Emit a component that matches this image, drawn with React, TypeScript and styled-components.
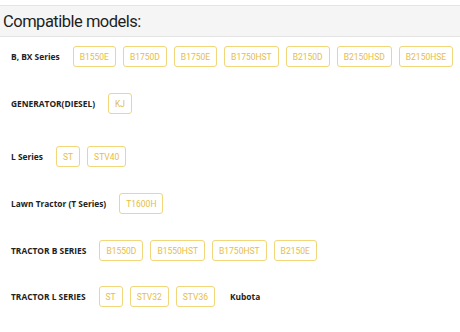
import React from "react";
import styled, { createGlobalStyle } from "styled-components";

const Global = createGlobalStyle`
  html, body { margin: 0; padding: 0; background: #ffffff; }
  body { font-family: "Open Sans", "Noto Sans", sans-serif; }
`;

const Page = styled.div`
  width: 460px;
  padding-top: 5px;
`;

const Header = styled.div`
  height: 30px;
  background: #f5f5f5;
  border-top: 1px solid #e4e4e4;
  border-bottom: 1px solid #e4e4e4;
  display: flex;
  align-items: center;
  padding-left: 3px;
`;

const Title = styled.h2`
  margin: 0;
  font-family: "Roboto", "Open Sans", sans-serif;
  font-weight: 400;
  font-size: 16.5px;
  letter-spacing: -0.5px;
  color: #1e1e1e;
`;

const List = styled.div`
  display: flex;
  flex-direction: column;
  padding-left: 11px;
`;

const Row = styled.div<{ $top: number }>`
  display: flex;
  align-items: center;
  margin-top: ${(p) => p.$top}px;
  height: 21px;
`;

const Label = styled.span`
  font-family: "Open Sans", sans-serif;
  font-weight: 700;
  font-size: 8.4px;
  color: #222222;
  margin-right: 13px;
  white-space: nowrap;
`;

const Tags = styled.div`
  display: flex;
  gap: 7px;
  align-items: center;
`;

const Tag = styled.span`
  box-sizing: border-box;
  height: 21px;
  display: inline-flex;
  align-items: center;
  padding: 0 6px;
  border: 1.5px solid #f1d67a;
  border-radius: 3px;
  font-family: "Roboto", sans-serif;
  font-size: 8.5px;
  color: #e6bd45;
  white-space: nowrap;
`;

const Brand = styled.span`
  font-family: "Open Sans", sans-serif;
  font-weight: 700;
  font-size: 8.4px;
  color: #222222;
  margin-left: 15px;
`;

type Series = { label: string; models: string[]; top: number; brand?: string };

const data: Series[] = [
  { label: "B, BX Series", top: 9, models: ["B1550E", "B1750D", "B1750E", "B1750HST", "B2150D", "B2150HSD", "B2150HSE"] },
  { label: "GENERATOR(DIESEL)", top: 26, models: ["KJ"] },
  { label: "L Series", top: 32, models: ["ST", "STV40"] },
  { label: "Lawn Tractor (T Series)", top: 26, models: ["T1600H"] },
  { label: "TRACTOR B SERIES", top: 26, models: ["B1550D", "B1550HST", "B1750HST", "B2150E"] },
  { label: "TRACTOR L SERIES", top: 25, models: ["ST", "STV32", "STV36"], brand: "Kubota" },
];

export default function App() {
  return (
    <Page>
      <Global />
      <Header>
        <Title>Compatible models:</Title>
      </Header>
      <List>
        {data.map((s) => (
          <Row key={s.label} $top={s.top}>
            <Label>{s.label}</Label>
            <Tags>
              {s.models.map((m) => (
                <Tag key={m}>{m}</Tag>
              ))}
            </Tags>
            {s.brand && <Brand>{s.brand}</Brand>}
          </Row>
        ))}
      </List>
    </Page>
  );
}
